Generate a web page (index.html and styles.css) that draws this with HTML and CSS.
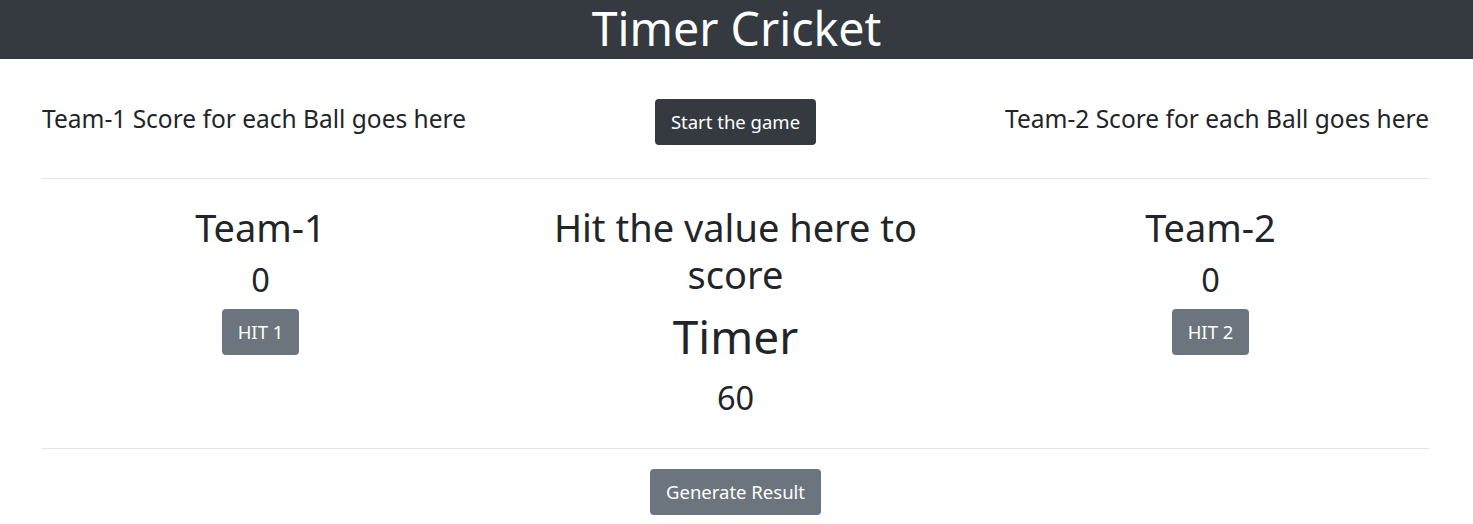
FILE: index.html
```html
<!DOCTYPE html>
<html>
<head>
<meta charset="utf-8">
<link rel="stylesheet" href="styles.css">
</head>
<body>
<header class="topbar"><h1 class="title">Timer Cricket</h1></header>
<main class="main">
  <section class="balls">
    <div class="ball-text left">Team-1 Score for each Ball goes here</div>
    <div class="ball-mid"><button class="btn btn-dark">Start the game</button></div>
    <div class="ball-text right">Team-2 Score for each Ball goes here</div>
  </section>
  <hr class="rule">
  <section class="board">
    <div class="col">
      <h2 class="team">Team-1</h2>
      <div class="score">0</div>
      <button class="btn btn-grey">HIT 1</button>
    </div>
    <div class="col">
      <h2 class="team">Hit the value here to score</h2>
      <div class="timer">Timer</div>
      <div class="score">60</div>
    </div>
    <div class="col">
      <h2 class="team">Team-2</h2>
      <div class="score">0</div>
      <button class="btn btn-grey">HIT 2</button>
    </div>
  </section>
  <hr class="rule">
  <div class="result"><button class="btn btn-grey">Generate Result</button></div>
</main>
</body>
</html>
```

FILE: styles.css
```css
* { box-sizing: border-box; }
body {
  margin: 0;
  font-family: "Noto Sans", "Open Sans", sans-serif;
  color: #212529;
  background: #fff;
}
.topbar {
  background: #343a40;
  height: 59px;
  display: flex;
  justify-content: center;
  align-items: flex-start;
}
.title {
  margin: 0;
  color: #fff;
  font-weight: 400;
  font-size: 46.5px;
  line-height: 57px;
}
.main {
  margin-left: 42px;
  width: 1387px;
}
.balls {
  display: flex;
  align-items: flex-start;
  padding-top: 40px;
}
.ball-text {
  flex: 1;
  font-size: 24.5px;
  line-height: 30px;
  padding-top: 5px;
}
.ball-text.right { text-align: right; }
.ball-mid { flex: 0 0 auto; }
.btn {
  border: 0;
  border-radius: 4px;
  color: #fff;
  font-family: inherit;
  font-size: 18.5px;
  line-height: 30px;
  padding: 8px 16px;
  cursor: pointer;
}
.btn-dark { background: #343a40; }
.btn-grey { background: #6c757d; }
.rule {
  border: 0;
  border-top: 1px solid #e5e5e5;
  margin: 33px 0 0;
}
.board {
  display: flex;
  margin: 0 -19px;
  padding-top: 25px;
}
.col {
  flex: 1;
  display: flex;
  flex-direction: column;
  align-items: center;
  text-align: center;
  padding: 0 45px;
}
.team {
  margin: 0;
  font-weight: 400;
  font-size: 38px;
  line-height: 47px;
}
.score {
  font-size: 32.5px;
  line-height: 42px;
  margin-top: 8px;
}
.col .btn { margin-top: 8px; }
.timer {
  font-size: 46px;
  line-height: 60px;
  margin-top: 8px;
}
.timer + .score { margin-top: 11px; }
.board + .rule { margin-top: 29px; }
.result {
  display: flex;
  justify-content: center;
  padding-top: 20px;
}
```
